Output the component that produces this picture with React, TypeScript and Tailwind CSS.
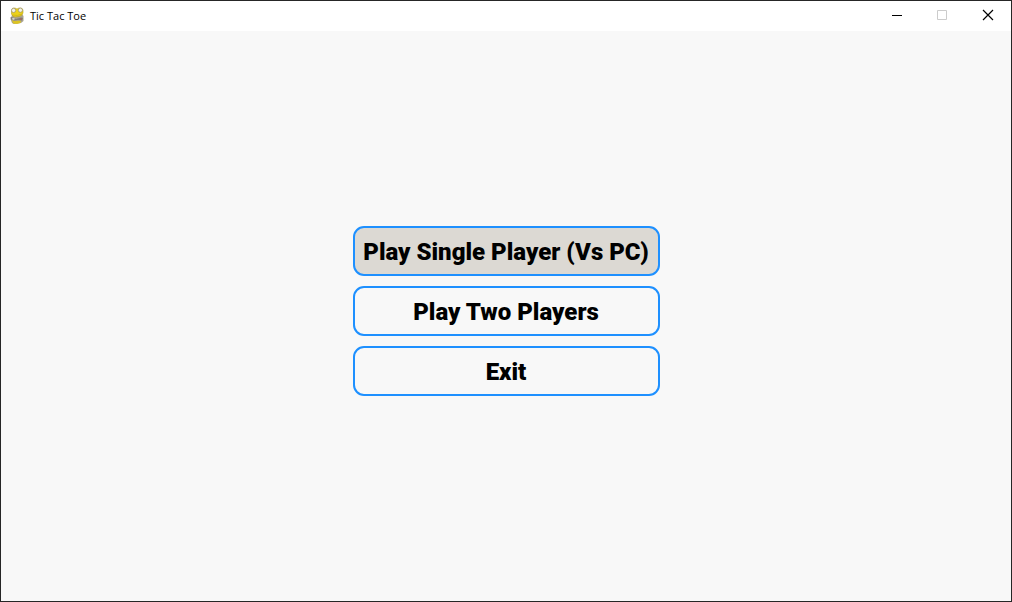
import type { ReactNode } from "react";

function SnakeIcon() {
  return (
    <svg width="16" height="18" viewBox="0 0 16 18" aria-hidden="true">
      <path d="M3 8 L1.5 12 L3 16 L5 17 L12 16 L14.5 14 L14.5 9 L13 7 Z" fill="#aaa391" />
      <path d="M3 13 L6 14 L12 13.5 L11.5 16 L8 17 L4 16.5 Z" fill="#dcc423" />
      <path d="M2.5 3 Q3 0.5 6 1 L8 2 L10 1 Q13.5 0.5 14 3 L14 6 Q13.5 8.5 10 9.5 L6 10 Q3 9.5 2.5 7 Z" fill="#ecd21b" stroke="#b39d25" strokeWidth="0.6" />
      <path d="M4 8 Q8 9.5 13 7" fill="none" stroke="#c9ae18" strokeWidth="0.7" />
      <circle cx="4.6" cy="3.4" r="2.1" fill="#f3f1e6" stroke="#8f8763" strokeWidth="0.6" />
      <circle cx="11.4" cy="3.2" r="2.1" fill="#f3f1e6" stroke="#8f8763" strokeWidth="0.6" />
      <path d="M1.5 10 L4 10.5 L7 12 L12 10.5 L14 11 L13 13.5 L9 13 L5 13.5 L2 12.5 Z" fill="#827f78" />
      <path d="M3.5 10.8 L6 11.5 L5 13 L3 12.2 Z" fill="#d8d6cf" />
      <circle cx="12" cy="12" r="0.9" fill="#a8655c" />
    </svg>
  );
}

function CaptionButton({ label, disabled, children }: { label: string; disabled?: boolean; children: ReactNode }) {
  return (
    <button type="button" aria-label={label} disabled={disabled} className="flex h-full w-[46px] items-center justify-center pb-[2px]">
      <svg width="10" height="10" viewBox="0 0 10 10" fill="none" className="overflow-visible" aria-hidden="true">
        {children}
      </svg>
    </button>
  );
}

function MenuButton({ label, active }: { label: string; active?: boolean }) {
  return (
    <button
      type="button"
      className={`h-[50px] w-full rounded-[11px] border-2 border-[#1e90ff] pt-[2px] text-center font-['Roboto',sans-serif] text-2xl leading-[44px] font-black whitespace-nowrap text-black ${
        active ? "bg-[#dcd9d3]" : "bg-[#f8f8f8]"
      }`}
    >
      {label}
    </button>
  );
}

export default function App() {
  return (
    <div className="flex min-h-screen flex-col border border-[#262626] bg-[#f8f8f8]">
      <header className="flex h-[30px] items-center justify-between bg-white pl-2">
        <div className="flex items-center gap-[5px]">
          <SnakeIcon />
          <h1 className="font-['Open_Sans',sans-serif] text-[11px] leading-4 text-black">Tic Tac Toe</h1>
        </div>
        <div className="flex h-full">
          <CaptionButton label="Minimize">
            <path d="M1 5.5h10" stroke="#000000" />
          </CaptionButton>
          <CaptionButton label="Maximize" disabled>
            <path d="M0.5 0.5h9v9h-9z" stroke="#cccccc" />
          </CaptionButton>
          <CaptionButton label="Close">
            <path d="M0 0l10 10M10 0L0 10" stroke="#000000" strokeWidth="1.2" />
          </CaptionButton>
        </div>
      </header>
      <main className="flex flex-1 items-center justify-center pb-[10px]">
        <nav aria-label="Game menu" className="flex w-[307px] flex-col gap-[10px]">
          <MenuButton label="Play Single Player (Vs PC)" active />
          <MenuButton label="Play Two Players" />
          <MenuButton label="Exit" />
        </nav>
      </main>
    </div>
  );
}
